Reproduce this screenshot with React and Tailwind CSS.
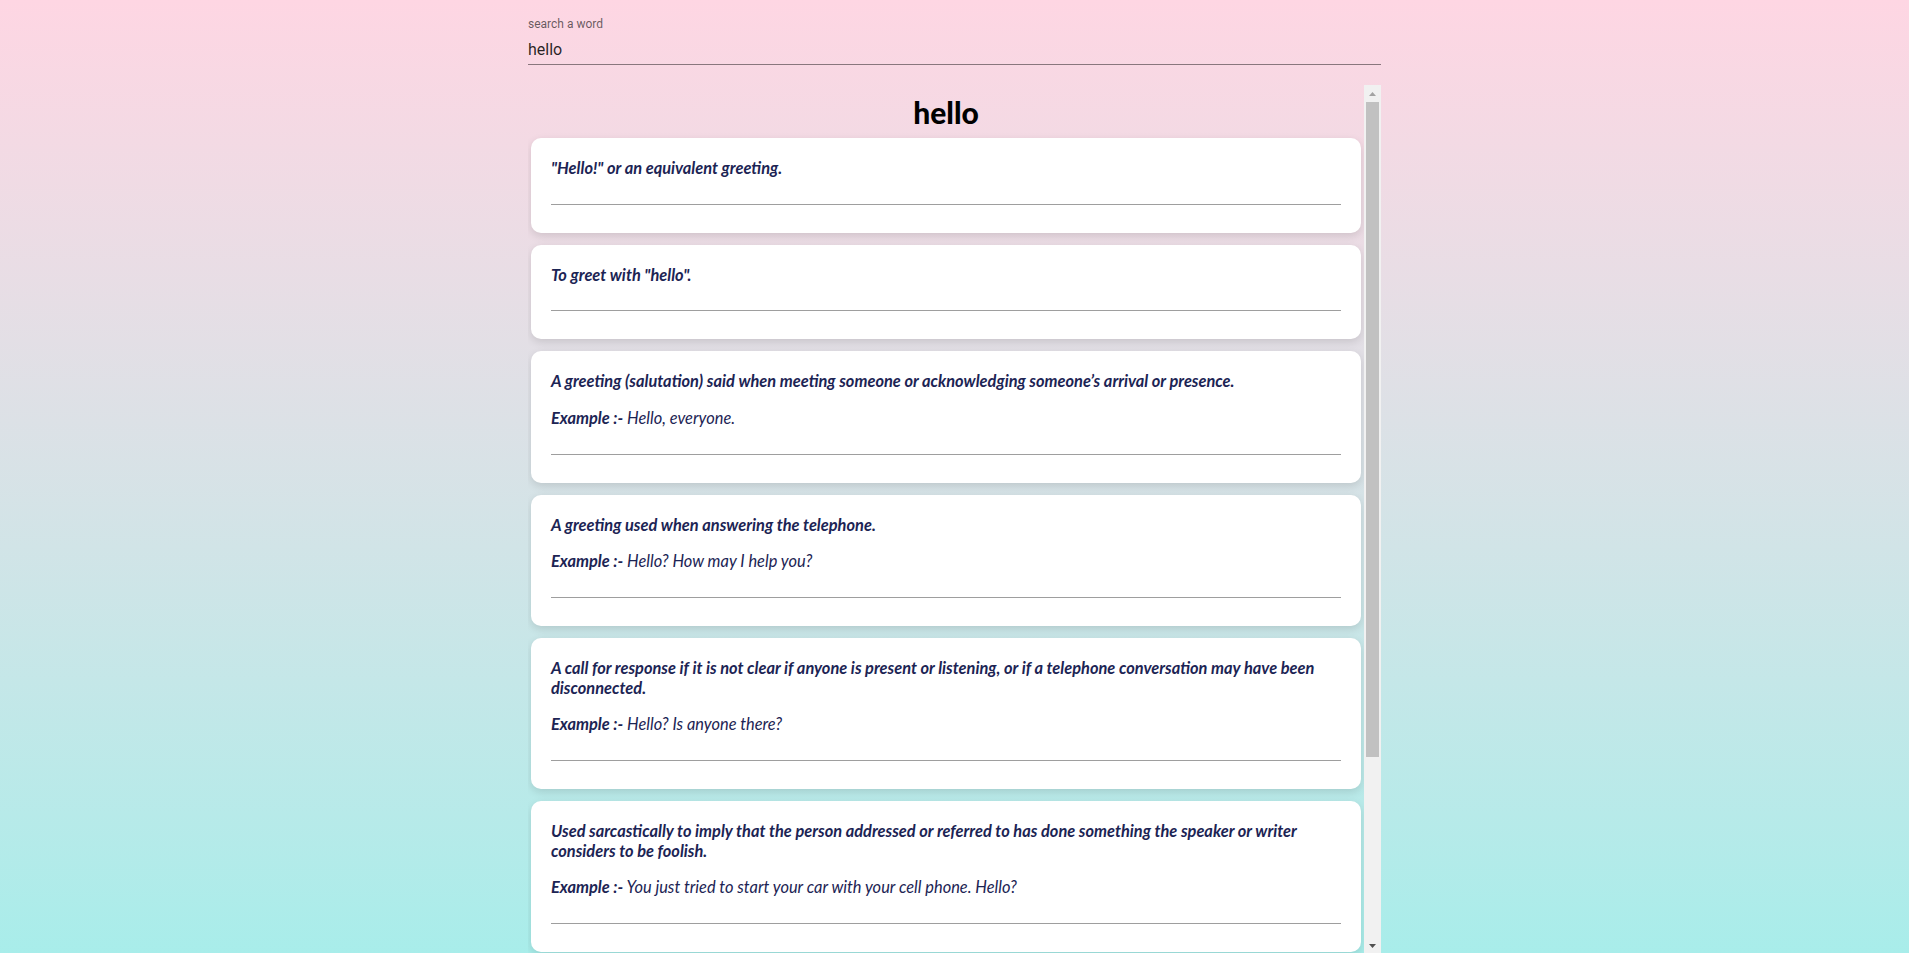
import React from "react";

const meanings = [
  { definition: "\"Hello!\" or an equivalent greeting." },
  { definition: "To greet with \"hello\"." },
  {
    definition:
      "A greeting (salutation) said when meeting someone or acknowledging someone’s arrival or presence.",
    example: "Hello, everyone.",
  },
  {
    definition: "A greeting used when answering the telephone.",
    example: "Hello? How may I help you?",
  },
  {
    definition:
      "A call for response if it is not clear if anyone is present or listening, or if a telephone conversation may have been disconnected.",
    example: "Hello? Is anyone there?",
  },
  {
    definition:
      "Used sarcastically to imply that the person addressed or referred to has done something the speaker or writer considers to be foolish.",
    example: "You just tried to start your car with your cell phone. Hello?",
  },
];

const Card = ({ definition, example }) => (
  <div className="bg-white rounded-[10px] shadow-[0_3px_8px_rgba(0,0,0,0.12)] px-5 pt-5 pb-7 text-[#1c2454] italic font-['Lato',sans-serif] text-[16.4px]">
    <p className="font-bold leading-[19.5px]">{definition}</p>
    {example && (
      <p className="mt-[17px] leading-[20px]">
        <b>Example :-</b> {example}
      </p>
    )}
    <hr className="mt-[26px] border-0 border-t border-[#9e9e9e]" />
  </div>
);

// classic-looking scrollbar, the list is long
const Scrollbar = () => (
  <div className="w-[17px] shrink-0 bg-[#f1f1f1] flex flex-col">
    <div className="h-[17px] flex items-center justify-center">
      <svg width="7" height="4" viewBox="0 0 7 4">
        <path d="M3.5 0L7 4H0z" fill="#a3a3a3" />
      </svg>
    </div>
    <div className="h-[655px] mx-[2px] bg-[#c1c1c1]" />
    <div className="flex-1" />
    <div className="h-[17px] flex items-center justify-center">
      <svg width="7" height="4" viewBox="0 0 7 4">
        <path d="M0 0h7L3.5 4z" fill="#505050" />
      </svg>
    </div>
  </div>
);

export default function App() {
  return (
    <div className="min-h-screen bg-linear-to-b from-[#fed6e3] to-[#a8edea] flex flex-col items-center">
      <div className="w-[853px] mt-[16px] font-['Roboto',sans-serif]">
        <label className="block text-[12px] leading-[17px] text-black/60">search a word</label>
        <div className="border-b border-black/45 pt-[5px] pb-[2px]">
          <input
            className="w-full bg-transparent outline-none text-[16px] leading-[23px] text-black/85"
            defaultValue="hello"
          />
        </div>
      </div>

      <div className="w-[853px] h-[869px] mt-[20px] flex">
        <div className="flex-1 overflow-hidden px-[3px] pt-[8px]">
          <h1 className="text-center text-[30px] leading-[38px] font-black font-['Lato',sans-serif] text-black mb-[7px]">
            hello
          </h1>
          <div className="flex flex-col gap-3">
            {meanings.map((m, i) => (
              <Card key={i} {...m} />
            ))}
          </div>
        </div>
        <Scrollbar />
      </div>
    </div>
  );
}
